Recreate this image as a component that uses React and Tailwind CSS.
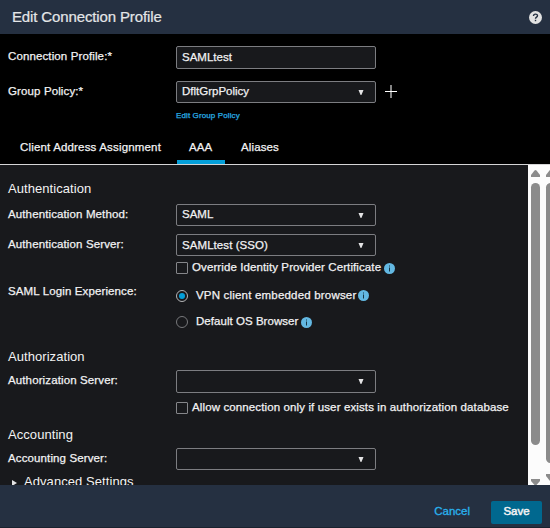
import React from "react";

const text = "block whitespace-nowrap text-[11.5px] leading-4 font-normal [-webkit-text-stroke:0.25px_currentColor]";
const label = `${text} tracking-[0.12px]`;

function Caret() {
  return (
    <svg width="6" height="5" viewBox="0 0 6 5" className="shrink-0">
      <path d="M0.5 0H5.5L3.4 5H2.6Z" fill="#e4e4e5" />
    </svg>
  );
}

function Field({ value, className = "h-[22px]", textClass = "pb-[2px]", arrow = true }) {
  return (
    <div className={`flex w-[200px] shrink-0 items-center justify-between rounded-[2px] border border-[#7c7d81] bg-[#18191c] pr-[11px] pl-[5px] ${className}`}>
      <span className={`${text} ${textClass}`}>{value}</span>
      {arrow && <Caret />}
    </div>
  );
}

function Row({ text: caption, className, children }) {
  return (
    <div className={`flex shrink-0 items-start ${className}`}>
      <div className="w-[168px] shrink-0 pt-[2px]">
        <span className={label}>{caption}</span>
      </div>
      {children}
    </div>
  );
}

function Info() {
  return (
    <svg width="11" height="11" viewBox="0 0 11 11" className="shrink-0">
      <circle cx="5.5" cy="5.5" r="5.5" fill="#63b8e2" />
      <path d="M5 2.5H6V3.5H5ZM5 4.5H6V8.5H5Z" fill="#173646" />
    </svg>
  );
}

function Checkbox() {
  return <span className="size-3 shrink-0 rounded-[1px] border border-[#85868a]" />;
}

function Radio({ checked }) {
  return (
    <span className={`flex size-3 shrink-0 items-center justify-center rounded-full border ${checked ? "border-[#b4b5b7]" : "border-[#77787b]"}`}>
      {checked && <span className="size-1.5 rounded-full bg-[#049fd9]" />}
    </span>
  );
}

function Heading({ children, className }) {
  return <h2 className={`shrink-0 text-[13px] leading-4 font-normal tracking-[0.06px] ${className}`}>{children}</h2>;
}

export default function App() {
  return (
    <div className="flex h-[528px] w-[550px] flex-col overflow-hidden bg-black font-['Liberation_Sans',Arial,sans-serif] text-[#f2f2f3]">
      <header className="flex h-[34px] shrink-0 items-center justify-between bg-[#253041] pr-2 pl-3">
        <h1 className="pb-px text-[15px] leading-5 font-normal tracking-[-0.13px] text-[#e4e6e8] [-webkit-text-stroke:0.2px_currentColor]">Edit Connection Profile</h1>
        <svg width="13" height="13" viewBox="0 0 13 13">
          <circle cx="6.5" cy="6.5" r="6.5" fill="#e2e2e2" />
          <path d="M4.5 5.1C4.5 2.5 8.5 2.6 8.5 4.8C8.5 6.2 6.5 6.1 6.5 7.8" fill="none" stroke="#253041" strokeWidth="1.4" />
          <path d="M5.8 8.8H7.2V10.2H5.8Z" fill="#253041" />
        </svg>
      </header>

      <section className="h-[100px] shrink-0 pt-3 pl-2">
        <Row text="Connection Profile:*" className="h-[35px]">
          <Field value="SAMLtest" arrow={false} className="h-[23px]" />
        </Row>
        <Row text="Group Policy:*" className="h-[30px]">
          <Field value="DfltGrpPolicy" />
          <svg width="12" height="13" viewBox="0 0 12 13" className="mt-1 ml-[9px]">
            <path d="M6 0V13" stroke="#858585" strokeWidth="2" />
            <path d="M0 6.5H12" stroke="#fff" />
          </svg>
        </Row>
        <a className="ml-[168px] block text-[8px] leading-[10px] font-normal tracking-[0.12px] text-[#29aee6] [-webkit-text-stroke:0.25px_currentColor]">Edit Group Policy</a>
      </section>

      <nav className="flex h-[31px] shrink-0 items-stretch border-b border-[#d5d5d6]">
        <div className="w-[177px] pt-[5px] pl-5"><span className={`${text} tracking-[0.17px]`}>Client Address Assignment</span></div>
        <div className="w-12 border-b-4 border-[#049fd9] pt-[5px] pl-3"><span className={label}>AAA</span></div>
        <div className="pt-[5px] pl-4"><span className={label}>Aliases</span></div>
      </nav>

      <main className="flex h-[320px] shrink-0 overflow-hidden bg-[#18191c]">
        <div className="flex h-[320px] w-[528px] shrink-0 flex-col overflow-hidden pt-4 pl-2">
          <Heading className="mb-[7px]">Authentication</Heading>
          <Row text="Authentication Method:" className="h-[30px]"><Field value="SAML" /></Row>
          <Row text="Authentication Server:" className="h-[26px]"><Field value="SAMLtest (SSO)" textClass="tracking-[0.07px]" /></Row>
          <div className="ml-[168px] flex h-[21px] shrink-0 items-start">
            <span className="mt-[2px] flex"><Checkbox /></span>
            <span className={`${text} -mt-px ml-1 tracking-[0.1px]`}>Override Identity Provider Certificate</span>
            <span className="mt-[3px] ml-[3px]"><Info /></span>
          </div>
          <Row text="SAML Login Experience:" className="h-[68px]">
            <div>
              <div className="mt-[5px] flex h-[26px] items-start pt-1">
                <Radio checked />
                <span className={`${text} -mt-[3px] ml-2 tracking-[0.19px]`}>VPN client embedded browser</span>
                <span className="ml-[2px]"><Info /></span>
              </div>
              <div className="flex h-[26px] items-start pt-1">
                <Radio />
                <span className={`${text} -mt-[3px] ml-2 tracking-[0.04px]`}>Default OS Browser</span>
                <span className="mt-px ml-[3px]"><Info /></span>
              </div>
            </div>
          </Row>
          <Heading className="mb-[5px]">Authorization</Heading>
          <Row text="Authorization Server:" className="h-[30px]"><Field value="" className="h-[23px]" /></Row>
          <div className="ml-[168px] flex h-[27px] shrink-0 items-start">
            <span className="mt-[2px] flex"><Checkbox /></span>
            <span className={`${label} -mt-px ml-1`}>Allow connection only if user exists in authorization database</span>
          </div>
          <Heading className="mb-[5px]">Accounting</Heading>
          <Row text="Accounting Server:" className="h-[25px]"><Field value="" /></Row>
          <div className="flex shrink-0 items-start pl-1">
            <svg width="5" height="6" viewBox="0 0 5 6" className="mt-[7px] mr-[7px]"><path d="M0 0L5 3L0 6Z" fill="#e4e4e5" /></svg>
            <span className="mt-px text-[13px] leading-4 tracking-[0.07px]">Advanced Settings</span>
          </div>
        </div>
        <svg width="22" height="320" viewBox="0 0 22 320" className="shrink-0">
          <rect width="22" height="320" fill="#fcfcfc" />
          <g fill="#8b8b8b">
            <path d="M3 12V10L6.5 5.5Q7.5 4.5 8.5 5.5L12 10V12Z" />
            <path d="M18 12V10L21.5 5.5L22 5V12Z" />
            <rect x="3" y="18" width="9" height="262" rx="4.5" />
            <rect x="18" y="18" width="9" height="280" rx="4.5" />
            <path d="M3 314H12V316L8.5 320H6.5L3 316Z" />
            <path d="M18 309H22V316L18 311Z" />
          </g>
        </svg>
      </main>

      <footer className="flex h-[43px] shrink-0 items-start justify-end border-b border-[#1a222e] bg-[#253041] pt-4 pr-2">
        <button className="mt-[2px] mr-[21px] text-[11.5px] leading-4 text-[#29b2ee] [-webkit-text-stroke:0.3px_currentColor]">Cancel</button>
        <button className="h-[23px] w-[51px] rounded-[2px] bg-[#00688f] pb-[3px] text-[11.5px] leading-4 [-webkit-text-stroke:0.5px_currentColor]">Save</button>
      </footer>
    </div>
  );
}
